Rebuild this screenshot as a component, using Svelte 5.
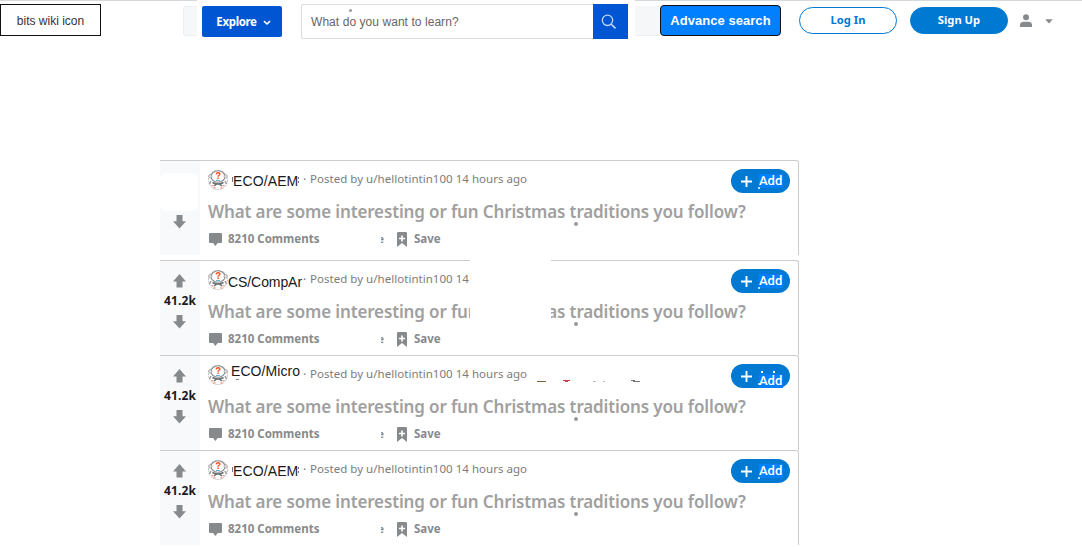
<script>
  const posts = [
    { tag: 'ECO/AEM', kind: 'aem', votes: '', patch: false },
    { tag: 'CS/CompAr', kind: 'cs', votes: '41.2k', patch: true },
    { tag: 'ECO/Micro', kind: 'micro', votes: '41.2k', patch: false },
    { tag: 'ECO/AEM', kind: 'aem', votes: '41.2k', patch: false }
  ];
</script>

<header>
  <button class="wiki">bits wiki icon</button>
  <i class="stub left"></i>
  <button class="explore">
    <span>Explore</span>
    <svg width="8" height="6" viewBox="0 0 8 6"><path d="M1 1.2 4 4 7 1.2" fill="none" stroke="#fff" stroke-width="1.6" /></svg>
  </button>
  <div class="search">
    <span class="hint">What do you want to learn?</span>
    <i class="dot"></i>
    <button class="go" aria-label="Search">
      <svg width="16" height="16" viewBox="0 0 16 16" fill="none" stroke="#c4d7f4"><circle cx="6.5" cy="6.3" r="5.2" stroke-width="1.3" /><path d="m10.2 10.2 4.3 4.2" stroke-width="1.6" /></svg>
    </button>
  </div>
  <div class="account">
    <i class="stub right"></i>
    <button class="advance">Advance search</button>
    <button class="login">Log In</button>
    <button class="signup">Sign Up</button>
    <svg class="user" width="12" height="13" viewBox="0 0 12 13" fill="#878a8c"><circle cx="6" cy="3.3" r="3" /><path d="M0 13v-2.1C0 8.9 1.7 7.7 3.5 7.7h5c1.8 0 3.5 1.2 3.5 3.2V13z" /></svg>
    <svg class="caret" width="8" height="5" viewBox="0 0 8 5" fill="#878a8c"><path d="M.3.3h7.4L4.3 4.2H3.7z" /></svg>
  </div>
</header>

<main>
  {#each posts as post, i}
    <article class:first={i === 0}>
      <aside>
        <svg width="14" height="14" viewBox="0 0 14 14" fill="#878a8c"><path d="M6.500 0 13 7.600H9.500V13.500H3.500V7.600H0z" /></svg>
        <b>{post.votes}</b>
        <svg width="14" height="14" viewBox="0 0 14 14" fill="#878a8c"><path d="M6.500 13.600 0 6.200H3.500V0h6v6.200H13z" /></svg>
        {#if !post.votes}<i class="cover"></i>{/if}
      </aside>
      <section>
        <div class="meta">
          <svg class="avatar" width="20" height="20" viewBox="0 0 20 20">
            <circle cx="10" cy="10" r="9.500" fill="#fff" stroke="#b0b4b6" stroke-width=".8" stroke-dasharray="2 .7" />
            <path d="M3 11 1.500 14M17 11l1.500 3" stroke="#999" stroke-width="1.500" />
            <ellipse cx="10" cy="6.500" rx="7" ry="5.700" fill="#fff" stroke="#8a8e91" stroke-width="1.100" />
            <circle cx="2.300" cy="6.300" r="1.700" fill="#ddd" stroke="#999" stroke-width=".7" /><circle cx="17.700" cy="6.300" r="1.700" fill="#ddd" stroke="#999" stroke-width=".7" />
            <path d="M4.500 12.500q5.500 3 11 0M6 16l3.500-2.500M14 16l-3.500-2.500" fill="none" stroke="#686e72" stroke-width="1.500" />
            <path d="M8.200 4.300Q8.500 2.600 10.200 2.700q1.900.2 1.600 1.700c-.3 1.100-1.700 1.200-1.700 2.300M10.100 7.600v1.300" fill="none" stroke="#ff5422" stroke-width="1.500" />
            <path d="m3.500 15.500 2 .5M14.500 16l2-.5M5.500 18.200l2-.5M12.500 17.700l2 .5" stroke="#f47b50" />
            <path d="M8 10.500h4" stroke="#4a9acb" stroke-width=".8" />
          </svg>
          <span class="tag {post.kind}">{post.tag}</span>
          <span class="sep">·</span>
          <span class="by">Posted by u/hellotintin100 14 hours ago</span>
        </div>
        <h3>What are some interesting or fun Christmas traditions you follow?</h3>
        <div class="actions">
          <svg class="bubble" width="13" height="13" viewBox="0 0 13 13" fill="#878a8c"><path d="M1 0h11q1 0 1 1v8q0 1-1 1H8.800l-2.500 3-2.200-3H1q-1 0-1-1V1q0-1 1-1" /></svg>
          <span class="comments">8210 Comments</span>
          <span class="rest"><span>e</span></span>
          <svg class="mark" width="10" height="15" viewBox="0 0 10 15"><path d="M1.200 0h7.600Q10 0 10 1.200V15l-5-4-5 4V1.200Q0 0 1.200 0" fill="#878a8c" /><path d="M5 3.500v6M2 6.500h6" stroke="#fff" stroke-width="1.600" /></svg>
          <span class="save">Save</span>
        </div>
      </section>
      <button class="add">
        <svg width="11" height="11" viewBox="0 0 11 11"><path d="M5.500 0v11M0 5.500h11" stroke="#fff" stroke-width="1.900" /></svg>
        <span class:low={post.kind === 'micro'}>Add</span>
      </button>
      <i class="speck"></i>
      {#if post.patch}<i class="patch"></i>{/if}
      {#if post.kind === 'micro'}
        <svg class="sliver" width="106" height="2" viewBox="0 0 106 2"><path d="M1 1.500h9" stroke="#806441" /><path d="M27 .5h7M29 1.500h3" stroke="#d33d45" /><path d="M57 1.500h3M67 1.500h2" stroke="#bbb" /><path d="M95 .5h4M97 1.500h7" stroke="#777" /></svg>
      {/if}
    </article>
  {/each}
</main>

<style>
  :global(body) { background: #fff; overflow: hidden; }
  * { box-sizing: border-box; }
  svg { display: block; flex: none; }
  button { border: 0; padding: 0; margin: 0; flex: none; }
  header {
    height: 41px; display: flex; align-items: flex-start; white-space: nowrap;
    background: linear-gradient(#d6d9dc, #d6d9dc) 0 0 / 197px 1px no-repeat,
      linear-gradient(#d6d9dc, #d6d9dc) 635px 0 / 447px 1px no-repeat;
    font-family: "Liberation Sans", Arial, sans-serif;
  }
  .wiki { width: 101px; height: 32px; margin-top: 4px; padding-top: 1px; background: #fff; border: 1px solid #111; font: 12px "Liberation Sans", Arial, sans-serif; color: #333; }
  .stub { background: #f6f7f8; border: 1px solid #edeff1; height: 30px; margin-top: 6px; flex: none; }
  .left { width: 14px; margin-left: 82px; border-right: 0; border-radius: 3px 0 0 3px; }
  .right { width: 25px; border-width: 0 0 1px; }
  .explore { width: 80px; height: 31px; margin: 6px 0 0 5px; background: #0056d2; border-radius: 2px; display: flex; align-items: center; justify-content: center; gap: 6px; color: #fff; font: 700 11.500px "Noto Sans", sans-serif; letter-spacing: -.35px; padding-left: 3px; }
  .explore svg { margin-top: 2px; }
  .search { width: 327px; height: 35px; margin: 4px 0 0 19px; border: 1px solid #ddd; border-right: 0; border-radius: 2px; display: flex; align-items: center; justify-content: space-between; position: relative; flex: none; }
  .hint { font-size: 12px; color: #666; padding-left: 9px; letter-spacing: .06px; }
  .dot { position: absolute; left: 47px; top: 4px; width: 3px; height: 3px; border-radius: 50%; background: #999; }
  .go { width: 35px; height: 35px; margin: -1px 0; background: #0056d2; display: grid; place-items: center; padding-right: 4px; }
  .account { display: flex; margin-left: 7px; }
  .advance { width: 121px; height: 31px; margin-top: 5px; background: #007fff; border: 1px solid #111; border-radius: 4px; color: #fff; font: 700 13px "Liberation Sans", Arial, sans-serif; letter-spacing: .04px; }
  .login, .signup { width: 98px; height: 27px; margin-top: 7px; border-radius: 14px; border: 1px solid #0079d3; font: 700 11.200px "Noto Sans", sans-serif; padding-bottom: 2px; }
  .login { margin-left: 18px; background: #fff; color: #0079d3; }
  .signup { margin-left: 13px; background: #0079d3; color: #fff; }
  .user { margin: 14px 0 0 12px; }
  .caret { margin: 19px 0 0 13px; }
  main { width: 639px; margin: 119px 0 0 160px; display: flex; flex-direction: column; }
  article { height: 95px; display: flex; position: relative; border: 1px solid #ccc; border-width: 1px 1px 0 0; border-radius: 0 3px 0 0; }
  article.first { margin-bottom: 5px; }
  aside { width: 40px; background: #f8f9fb; display: flex; flex-direction: column; align-items: center; padding-top: 13px; position: relative; flex: none; }
  aside b { font: 700 12px/14px "Noto Sans", sans-serif; color: #1a1a1b; height: 14px; margin: 6px 0 7px; letter-spacing: .15px; }
  .cover { position: absolute; left: 0; top: 12px; width: 38px; height: 38px; border-radius: 6px; background: #fff; }
  section { width: 545px; padding-left: 8px; white-space: nowrap; flex: none; }
  .meta { height: 37px; display: flex; align-items: flex-start; font: 12px/16px "Noto Sans", sans-serif; color: #7c7c7c; }
  .avatar { margin-top: 9px; }
  .tag { width: 75px; flex: none; font: 14px/16px "Liberation Sans", Arial, sans-serif; color: #1a1a1b; }
  .aem { padding: 12px 0 0 5px; position: relative; letter-spacing: .12px; }
  .aem::before, .aem::after { content: ""; position: absolute; width: 1px; background: #777; }
  .aem::before { left: 4px; top: 16px; height: 5px; }
  .aem::after { left: 70px; top: 16px; height: 6px; background: linear-gradient(#777 2px, transparent 2px 4px, #777 4px); }
  .cs { padding: 13px 0 0 0; letter-spacing: -.08px; }
  .micro { padding: 7px 0 0 3px; position: relative; letter-spacing: .08px; }
  .micro::after { content: ""; position: absolute; left: 8px; top: 23px; width: 3px; height: 1px; background: #888; }
  .sep { width: 7px; margin-top: 11px; }
  .by { margin-top: 10px; font-size: 11.500px; letter-spacing: .03px; }
  h3 { margin: 0; height: 27px; font: 600 17px/27px "Noto Sans", sans-serif; letter-spacing: -.14px; color: #a0a0a0; }
  .actions { height: 27px; display: flex; align-items: center; color: #878a8c; font: 700 11.500px/16px "Noto Sans", sans-serif; }
  .bubble { margin: 2px 6px 0 1px; }
  .comments { width: 92px; }
  .rest { width: 77px; display: flex; justify-content: flex-end; }
  .rest span { position: relative; margin-right: 13px; font-size: 10px; }
  .rest span::before { content: ""; position: absolute; left: 0; top: 0; width: 3px; height: 16px; background: #fff; }
  .mark { margin-top: 1px; }
  .save { margin-left: 7px; }
  .add { position: absolute; left: 571px; top: 8px; width: 59px; height: 24px; border-radius: 12px; background: #0079d3; color: #fff; display: flex; align-items: center; padding-left: 10px; gap: 7px; }
  .add span { position: relative; width: 24px; height: 14px; background: #007fff; font: 500 13px/14px Roboto, sans-serif; text-align: left; }
  .add span::before { content: ""; position: absolute; left: -1px; top: 13px; width: 2px; height: 2px; background: #fff; border-radius: 50%; }
  .add .low { top: 5px; }
  .low::after { content: ""; position: absolute; left: 2px; top: -3px; width: 14px; height: 2px; background: linear-gradient(90deg, #fff 2px, transparent 2px 12px, #fff 12px); }
  .add .low::before { top: 9px; }
  .speck { position: absolute; left: 414px; top: 61px; width: 4px; height: 4px; border-radius: 50%; background: #999; }
  .patch { position: absolute; left: 310px; top: -1px; width: 81px; height: 66px; background: #fff; }
  .sliver { position: absolute; left: 376px; top: 24px; }
</style>
